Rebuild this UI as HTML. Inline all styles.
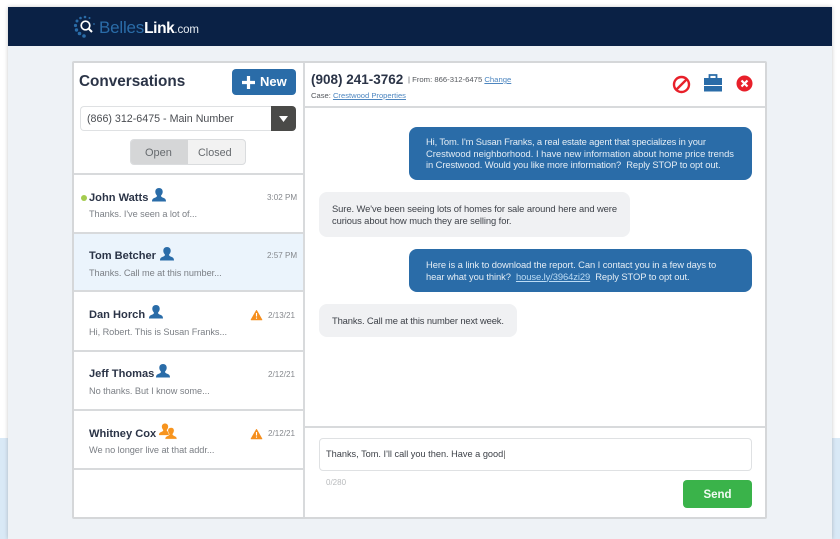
<!DOCTYPE html>
<html><head><meta charset="utf-8"><style>
html,body{margin:0;padding:0}
body{width:840px;height:539px;overflow:hidden;position:relative;background:linear-gradient(#fff 0,#fff 438px,#d9e9f6 438px);font-family:"Liberation Sans",sans-serif}
#w{position:absolute;inset:0;filter:blur(.35px)}
.a{position:absolute;white-space:nowrap}
.n{font-weight:700;font-size:11.1px;color:#2b3447;line-height:14px}
.p{font-size:9.2px;color:#7b7f85;line-height:12px;letter-spacing:-.05px}
.t{font-size:8.1px;color:#85888d;line-height:12px}
.d{position:absolute;left:74px;width:229px;height:2px;background:#d8dadc}
.m{font-size:9.4px;line-height:11.6px;letter-spacing:-.08px;white-space:nowrap;position:absolute}
.b{position:absolute;border-radius:8px}
svg{position:absolute;overflow:visible}
</style></head><body><div id="w">
<svg width="0" height="0" style="left:0;top:0"><defs><path id="u" d="M7 0c2.200 0 3.700 1.500 3.700 3.700S9.300 7 9 7.800c0 1 .8 1.400 2.200 2C12.700 10.400 14 11 14 13.500H0c0-2.500 1.300-3.100 2.800-3.700 1.400-.6 2.200-1 2.200-2C4.700 7 3.300 5.900 3.300 3.700S4.800 0 7 0z"/></defs></svg>
<div class="a" style="left:8px;top:7px;width:824px;height:532px;background:#eef2f6;box-shadow:0 0 4px rgba(0,0,0,.22)"></div>
<div class="a" style="left:8px;top:7px;width:824px;height:39px;background:#0a2145"></div>
<svg style="left:73px;top:15px" width="24" height="24" viewBox="0 0 24 24"><g fill="#2a6ca8"><circle cx="12" cy="2" r="1.300"/><circle cx="7.500" cy="3" r="1.300"/><circle cx="16.500" cy="3" r="1"/><circle cx="4" cy="6" r="1.500"/><circle cx="2.500" cy="10.500" r="1.600"/><circle cx="3.500" cy="15" r="1.700"/><circle cx="6.500" cy="18.500" r="1.800"/><circle cx="11" cy="21" r="1.800"/><circle cx="21" cy="9" r=".9"/></g><circle cx="12.500" cy="10.500" r="4.300" fill="none" stroke="#fff" stroke-width="1.700"/><path d="M15.500 13.500l3.500 3.500" stroke="#fff" stroke-width="2"/></svg>
<div class="a" style="left:99px;top:18px;font-size:17px;line-height:20px;letter-spacing:-.2px;color:#2a6ca8">Belles<span style="color:#fff;font-weight:700;font-size:15.500px;letter-spacing:-.4px">Link</span><span style="color:#e6ecf2;font-size:11.500px;letter-spacing:-.1px">.com</span></div>

<div class="a" style="left:72px;top:61px;width:691px;height:454px;border:2px solid #d5d7d9;background:#fff;border-radius:2px"></div>
<div class="a" style="left:303px;top:63px;width:2px;height:454px;background:#d8dadc"></div>
<div class="a" style="left:305px;top:106px;width:460px;height:2px;background:#d8dadc"></div>
<div class="a" style="left:305px;top:426px;width:460px;height:2px;background:#d8dadc"></div>

<div class="a" style="left:79px;top:72px;font-size:15.300px;font-weight:700;line-height:20px;color:#2b3447">Conversations</div>
<div class="a" style="left:232px;top:69px;width:64px;height:26px;background:#2a6ca8;border-radius:4px"></div>
<svg style="left:241px;top:75px" width="15" height="15"><path d="M7.500 1v13M1 7.500h13" stroke="#fff" stroke-width="3.200"/></svg>
<div class="a" style="left:260px;top:74px;font-size:13px;font-weight:700;line-height:16px;color:#fff">New</div>

<div class="a" style="left:80px;top:106px;width:190px;height:23px;border:1px solid #dfe1e3;border-right:0;border-radius:4px 0 0 4px;background:#fff"></div>
<div class="a" style="left:87px;top:112px;font-size:10.700px;line-height:14px;color:#4a4d52">(866) 312-6475 - Main Number</div>
<div class="a" style="left:271px;top:106px;width:25px;height:25px;background:#4a4a48;border-radius:0 4px 4px 0"></div>
<svg style="left:279px;top:116px" width="10" height="7"><path d="M0 0h9L4.500 6z" fill="#fff"/></svg>

<div class="a" style="left:130px;top:139px;width:114px;height:24px;border:1px solid #dadcde;border-radius:4px;background:#f2f2f2;overflow:hidden"><div style="width:57px;height:24px;background:#d5d6d7"></div></div>
<div class="a" style="left:145px;top:146px;font-size:11px;line-height:14px;color:#666a6e">Open</div>
<div class="a" style="left:198px;top:146px;font-size:10.800px;line-height:14px;color:#666a6e">Closed</div>

<div class="a" style="left:74px;top:233px;width:229px;height:57px;background:#ebf4fc"></div>
<div class="d" style="top:173px"></div><div class="d" style="top:232px"></div><div class="d" style="top:290px"></div><div class="d" style="top:350px"></div><div class="d" style="top:409px"></div><div class="d" style="top:468px"></div>

<div class="a" style="left:81px;top:195px;width:6px;height:6px;border-radius:50%;background:#a4cc4f"></div>
<div class="a n" style="left:89px;top:191px">John Watts</div>
<div class="a p" style="left:89px;top:208px">Thanks. I've seen a lot of...</div>
<div class="a t" style="left:267px;top:192px">3:02 PM</div>
<svg style="left:152px;top:188px" width="14" height="14" viewBox="0 0 14 14" fill="#2a6ca8"><use href="#u"/></svg>

<div class="a n" style="left:89px;top:249px">Tom Betcher</div>
<div class="a p" style="left:89px;top:267px">Thanks. Call me at this number...</div>
<div class="a t" style="left:267px;top:250px">2:57 PM</div>
<svg style="left:160px;top:247px" width="14" height="14" viewBox="0 0 14 14" fill="#2a6ca8"><use href="#u"/></svg>

<div class="a n" style="left:89px;top:308px">Dan Horch</div>
<div class="a p" style="left:89px;top:326px">Hi, Robert. This is Susan Franks...</div>
<div class="a t" style="left:268px;top:310px">2/13/21</div>
<svg style="left:149px;top:305px" width="14" height="14" viewBox="0 0 14 14" fill="#2a6ca8"><use href="#u"/></svg>
<svg style="left:251px;top:310px" width="11" height="10" viewBox="0 0 11 10"><path d="M5.500 .5L10.800 9.800H.2z" fill="#f58f1f" stroke="#f58f1f" stroke-linejoin="round"/><path d="M5.500 3v3.500M5.500 7.500v1.300" stroke="#fff" stroke-width="1.100"/></svg>

<div class="a n" style="left:89px;top:367px">Jeff Thomas</div>
<div class="a p" style="left:89px;top:385px">No thanks. But I know some...</div>
<div class="a t" style="left:268px;top:369px">2/12/21</div>
<svg style="left:156px;top:364px" width="14" height="14" viewBox="0 0 14 14" fill="#2a6ca8"><use href="#u"/></svg>

<div class="a n" style="left:89px;top:427px">Whitney Cox</div>
<div class="a p" style="left:89px;top:444px">We no longer live at that addr...</div>
<div class="a t" style="left:268px;top:428px">2/12/21</div>
<svg style="left:159px;top:423px" width="12" height="13" viewBox="0 0 14 14" fill="#f7941e"><use href="#u"/></svg>
<svg style="left:165px;top:427px" width="12" height="13" viewBox="0 0 14 14" fill="#f7941e" stroke="#fff" stroke-width=".6"><use href="#u"/></svg>
<svg style="left:251px;top:429px" width="11" height="10" viewBox="0 0 11 10"><path d="M5.500 .5L10.800 9.800H.2z" fill="#f58f1f" stroke="#f58f1f" stroke-linejoin="round"/><path d="M5.500 3v3.500M5.500 7.500v1.300" stroke="#fff" stroke-width="1.100"/></svg>

<div class="a" style="left:311px;top:71px;font-size:13.500px;font-weight:700;line-height:18px;color:#2b3447">(908) 241-3762</div>
<div class="a" style="left:408px;top:74px;font-size:7.700px;line-height:12px;color:#55585d">| From: 866-312-6475 <span style="color:#4d86c0;text-decoration:underline">Change</span></div>
<div class="a" style="left:311px;top:90px;font-size:7.600px;line-height:12px;color:#55585d">Case: <span style="color:#4d86c0;text-decoration:underline">Crestwood Properties</span></div>
<svg style="left:672px;top:75px" width="19" height="19" viewBox="0 0 19 19"><circle cx="9.500" cy="9.500" r="7.500" fill="none" stroke="#e8202a" stroke-width="2.400"/><path d="M4.500 14.500l10-10" stroke="#e8202a" stroke-width="2.400"/></svg>
<svg style="left:704px;top:73px" width="18" height="19" viewBox="0 0 18 19"><path d="M5.500 5V2h7v3" fill="none" stroke="#2a6ca8" stroke-width="1.800"/><rect y="5" width="18" height="7" fill="#2a6ca8"/><rect y="13" width="18" height="5.500" fill="#2a6ca8"/></svg>
<svg style="left:736px;top:75px" width="17" height="17" viewBox="0 0 17 17"><circle cx="8.500" cy="8.500" r="8" fill="#e8202a"/><path d="M5.500 5.500l6 6M11.500 5.500l-6 6" stroke="#fff" stroke-width="2.200"/></svg>

<div class="b" style="left:409px;top:127px;width:343px;height:53px;background:#2a6ca8"></div>
<div class="m" style="left:426px;top:136px;color:#e4edf5"><span style="letter-spacing:-.14px">Hi, Tom. I'm Susan Franks, a real estate agent that specializes in your</span><br><span style="letter-spacing:0">Crestwood neighborhood. I have new information about home price trends</span><br>in Crestwood. Would you like more information?&nbsp; Reply STOP to opt out.</div>
<div class="b" style="left:319px;top:192px;width:311px;height:45px;background:#f0f1f3"></div>
<div class="m" style="left:332px;top:203px;color:#3d4148">Sure. We've been seeing lots of homes for sale around here and were<br>curious about how much they are selling for.</div>
<div class="b" style="left:409px;top:249px;width:343px;height:43px;background:#2a6ca8"></div>
<div class="m" style="left:426px;top:259px;color:#e4edf5">Here is a link to download the report. Can I contact you in a few days to<br>hear what you think?&nbsp; <span style="color:#bcdcf5;text-decoration:underline">house.ly/3964zi29</span>&nbsp; Reply STOP to opt out.</div>
<div class="b" style="left:319px;top:304px;width:198px;height:33px;background:#f0f1f3"></div>
<div class="m" style="left:332px;top:315px;color:#3d4148;letter-spacing:-.13px">Thanks. Call me at this number next week.</div>

<div class="a" style="left:319px;top:438px;width:431px;height:31px;border:1px solid #dfe1e3;border-radius:4px;background:#fff"></div>
<div class="a" style="left:326px;top:448px;font-size:9.200px;line-height:12px;color:#3d4148">Thanks, Tom. I'll call you then. Have a good<span style="color:#666">|</span></div>
<div class="a" style="left:326px;top:478px;font-size:8px;line-height:10px;color:#b9bbbd">0/280</div>
<div class="a" style="left:683px;top:480px;width:69px;height:28px;background:#3ab34a;border-radius:4px"></div>
<div class="a" style="left:683px;top:488px;width:69px;text-align:center;font-size:11.500px;font-weight:700;line-height:15px;color:#f2fbf3">Send</div>
</div></body></html>
